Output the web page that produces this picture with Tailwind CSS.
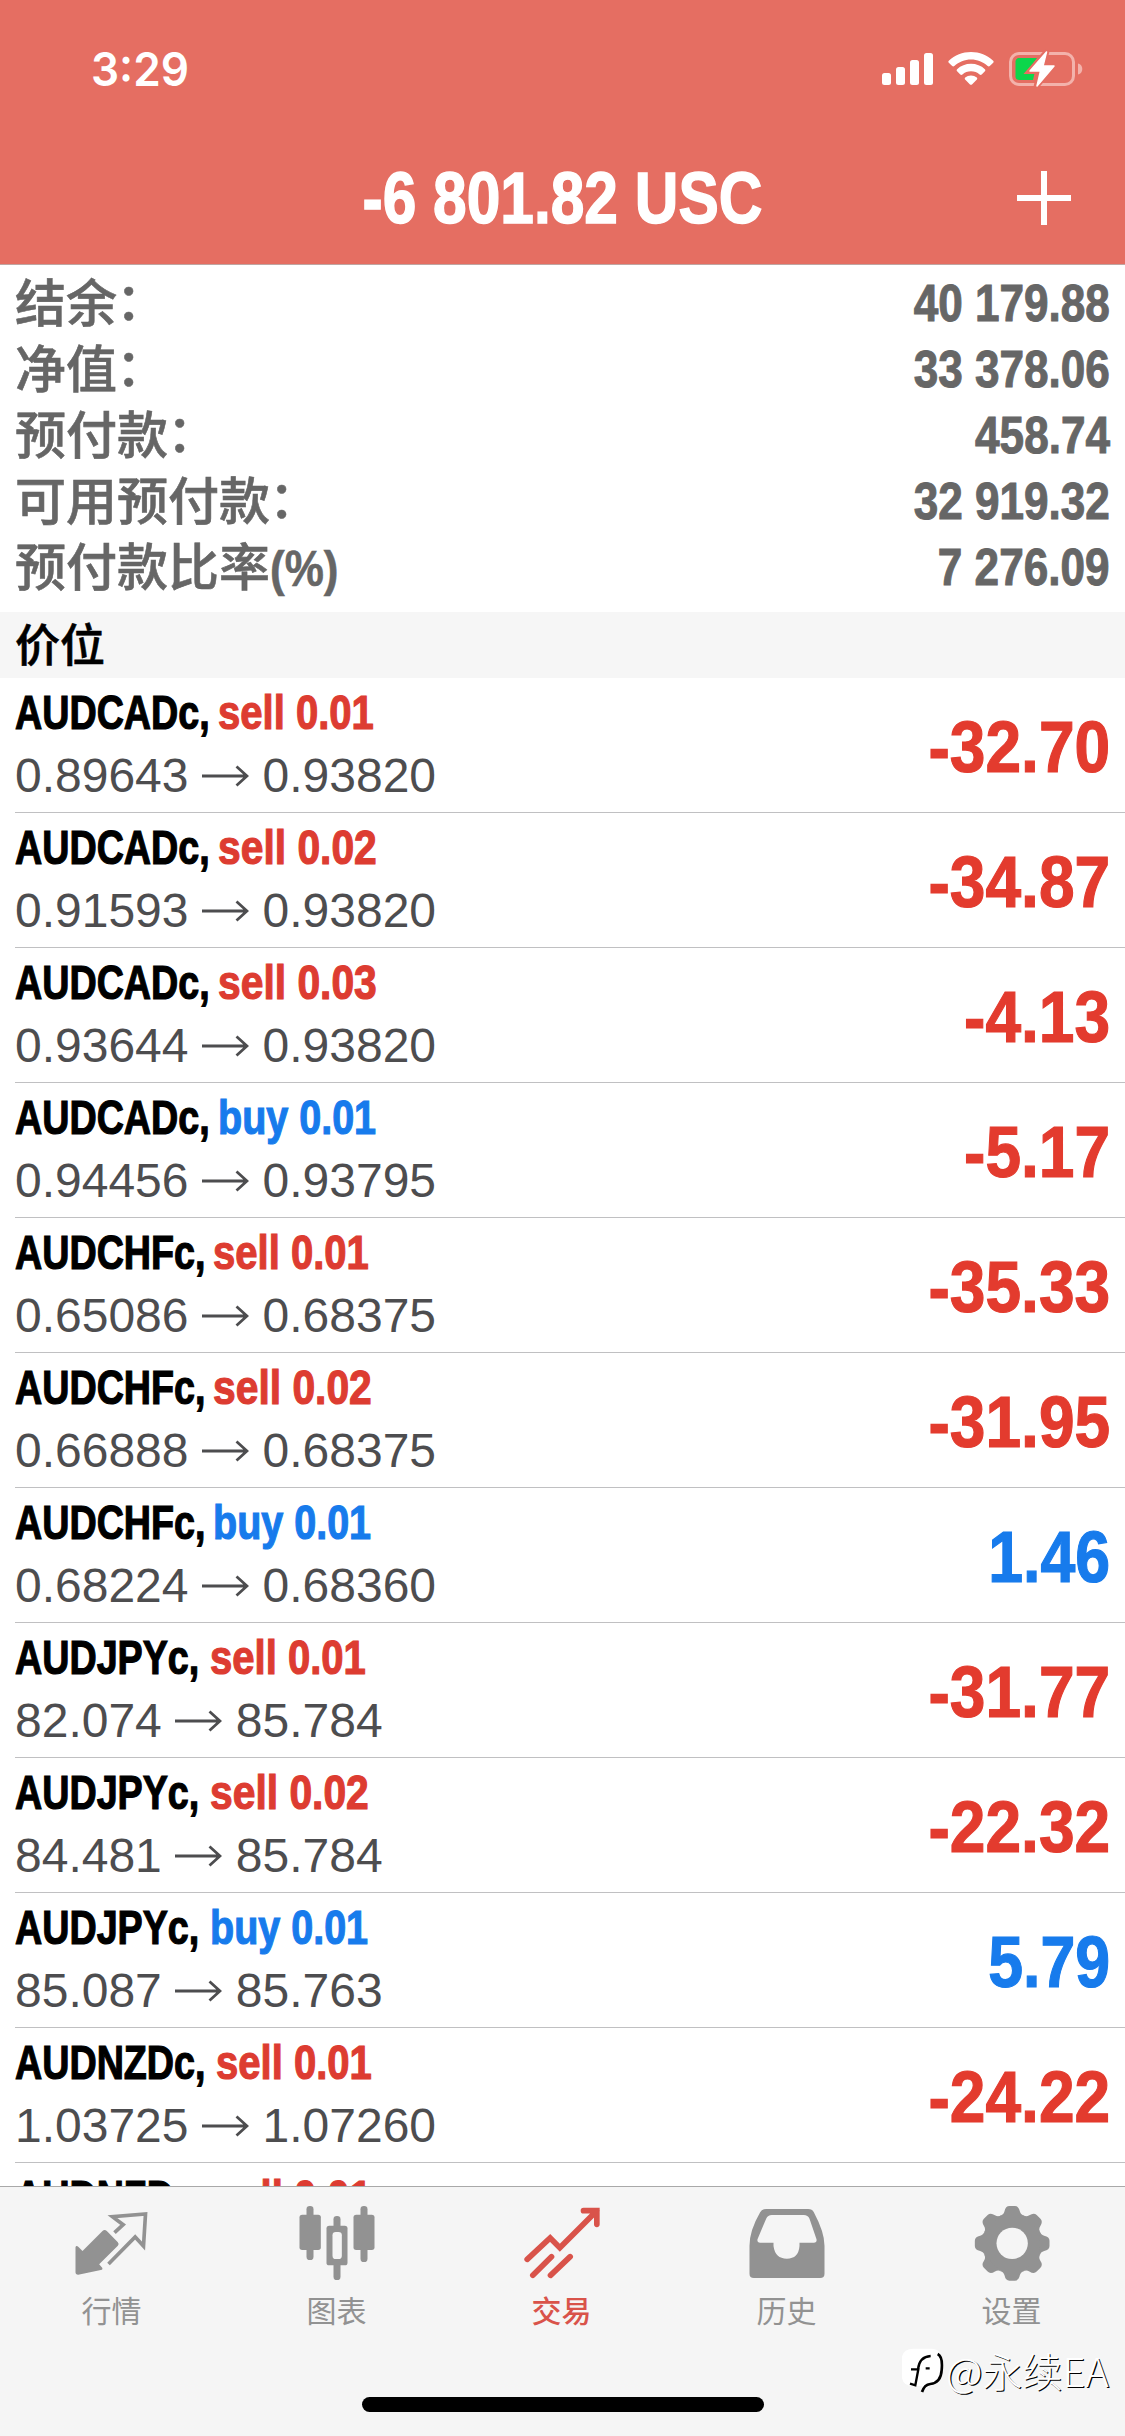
<!DOCTYPE html>
<html lang="zh-CN">
<head>
<meta charset="utf-8">
<title>交易</title>
<script src="https://cdn.jsdelivr.net/npm/@tailwindcss/browser@4"></script>
</head>
<body class="bg-white">
<div class="relative flex h-[2436px] w-[1125px] flex-col overflow-hidden bg-white font-['Liberation_Sans','Noto_Sans_CJK_SC',sans-serif]">
  <header class="flex h-[265px] shrink-0 flex-col border-b border-[#c0a5a2] bg-[#e56e62] text-white">
    <div class="flex h-[132px] items-start justify-between pr-[42px] pl-[91px]">
      <div class="origin-left scale-x-[0.94] pt-[39px] font-['Inter',sans-serif] text-[47px] leading-[60px] font-semibold">3:29</div>
      <svg class="mt-[40px] h-[60px] w-[205px]" viewBox="878 40 205 60" fill="#fff">
        <rect x="882" y="73" width="9" height="12" rx="2.5"/><rect x="896" y="67" width="9" height="18" rx="2.5"/><rect x="910" y="60" width="9" height="25" rx="2.5"/><rect x="924" y="53" width="9" height="32" rx="2.5"/>
        <path d="M971 52c8.500 0 16.300 3.300 22.200 8.700.6.600.6 1.500 0 2.100l-3.400 3.300c-.6.600-1.500.6-2.100 0C983.200 62 977.300 59.600 971 59.600s-12.200 2.400-16.700 6.500c-.6.600-1.500.6-2.100 0l-3.400-3.300c-.6-.6-.6-1.500 0-2.100C954.700 55.300 962.500 52 971 52z"/>
        <path d="M971 63.800c5.300 0 10.200 2 13.900 5.400.6.600.6 1.500 0 2.100l-3.200 3.200c-.6.500-1.500.6-2.100 0-2.300-2-5.300-3.200-8.600-3.200s-6.300 1.200-8.600 3.200c-.6.600-1.500.5-2.100 0l-3.200-3.200c-.6-.6-.6-1.500 0-2.100 3.700-3.400 8.600-5.400 13.900-5.400z"/>
        <path d="M971 75.500c2.200 0 4.200.8 5.800 2 .6.500.6 1.400.1 1.900l-4.900 5c-.6.600-1.400.6-2 0l-4.900-5c-.5-.5-.5-1.400.1-1.900 1.600-1.200 3.600-2 5.800-2z"/>
        <rect x="1010.500" y="53.500" width="63" height="31" rx="8.500" fill="none" stroke="#f3b2ab" stroke-width="3"/>
        <path d="M1078 63.500c3 .8 4.300 3 4.300 5.500s-1.300 4.700-4.300 5.500z" fill="#f3b2ab"/>
        <path d="M1019 58h18l-9 13h7l-2 9h-14c-2 0-3.500-1.500-3.500-3.500v-15c0-2 1.500-3.500 3.500-3.500z" fill="#0cd64b"/>
        <path d="M1047 51l-18 20.500h10.500L1036 87l18-21h-10.500z" stroke="#e56e62" stroke-width="5"/>
        <path d="M1046.500 52l-16.500 19h10.500L1037 86l17-20h-11z" stroke="#fff" stroke-width="1.500" stroke-linejoin="round"/>
      </svg>
    </div>
    <div class="grid h-[132px] grid-cols-[1fr_400px_1fr] items-center">
      <div></div>
      <h1 class="flex justify-center text-[73px] leading-[132px] font-bold [-webkit-text-stroke:1.5px]"><span class="scale-x-[0.828] whitespace-nowrap">-6 801.82 USC</span></h1>
      <svg class="mr-[54px] h-[54px] w-[54px] justify-self-end" viewBox="0 0 54 54" fill="#fff"><path d="M24 0h6v24h24v6H30v24h-6V30H0v-6h24z"/></svg>
    </div>
  </header>

  <section id="summary" class="flex h-[347px] shrink-0 flex-col pt-[7px] text-[#666]"></section>
  <h2 class="h-[66px] shrink-0 bg-[#f6f6f6] pt-[3px] pl-[15px] text-[45px] leading-[63px] font-medium text-black [-webkit-text-stroke:0.6px]">价位</h2>
  <main id="positions" class="min-h-0 flex-1 overflow-hidden"></main>

  <nav class="relative flex h-[250px] shrink-0 border-t border-[#a9a9a9] bg-[#f5f5f5] pt-[13px] text-[30px] leading-[56px] text-[#929292]">
    <div class="flex w-[225px] flex-col items-center">
      <svg class="h-[84px] w-[90px]" viewBox="202.500 150 270 252" fill="#929292">
        <path d="M225 292q2-8 9-1l12 12 60-60q6-6 13 0l33 34q5 6 0 10l-56 56 9 10q3 5-4 7l-68 14q-8 0-8-7z"/>
        <path d="M342 248l26-24-32-24 99-8-6 96-25-27-80 81" fill="none" stroke="#929292" stroke-width="11"/>
      </svg><span class="-translate-x-px">行情</span>
    </div>
    <div class="flex w-[225px] flex-col items-center">
      <svg class="h-[84px] w-[90px]" viewBox="877.500 150 270 252" fill="#929292">
        <rect x="918" y="168" width="21" height="162" rx="10"/><rect x="897" y="194" width="64" height="106" rx="8"/>
        <rect x="999" y="198" width="21" height="192" rx="10"/><rect x="978" y="227" width="63" height="119" rx="8"/><rect x="996" y="246" width="28" height="81" rx="10" fill="#f5f5f5"/>
        <rect x="1080" y="168" width="21" height="168" rx="10"/><rect x="1059" y="194" width="63" height="106" rx="8"/>
      </svg><span class="-translate-x-px">图表</span>
    </div>
    <div class="flex w-[225px] flex-col items-center text-[#d9534a]">
      <svg class="h-[84px] w-[90px]" viewBox="412.500 150 270 252" fill="none" stroke="#d9534a" stroke-width="17" stroke-linecap="round">
        <path d="M440 328l69-64 29 29L649 182M609 182h40v41M457 376l56-56M510 376l59-56"/>
      </svg><span class="-translate-x-px font-medium">交易</span>
    </div>
    <div class="flex w-[225px] flex-col items-center">
      <svg class="h-[84px] w-[90px]" viewBox="7.500 150 270 252" fill="#929292">
        <path fill-rule="evenodd" d="M77 177H203q12 0 17 10 32 60 32 100v84q0 13-13 13H40q-13 0-13-13v-84q0-45 32-100 6-10 18-10zM94 195q-12 0-17 11L51 268q-2 10 8 10H99v10q5 38 40 38t38-38v-10h43q10 0 8-10L207 206q-5-11-17-11z"/>
      </svg><span class="-translate-x-px">历史</span>
    </div>
    <div class="flex w-[225px] flex-col items-center">
      <svg class="h-[84px] w-[90px]" viewBox="682.500 150 270 252" fill="#929292">
        <g id="gear"></g><circle cx="815" cy="280" r="47" fill="#f5f5f5"/>
      </svg><span class="-translate-x-px">设置</span>
    </div>
    <div class="absolute top-[210px] left-[362px] h-[15px] w-[402px] rounded-full bg-black"></div>
    <div class="absolute top-[160px] left-[902px] flex items-center text-white">
      <svg class="h-[50px] w-[42px]" viewBox="485 607 126 150"><path d="M520 612h52q32 0 32 34v34q0 40-36 44l-26 20 4-20h-28q-34 0-34-34v-44q0-34 36-34z" fill="#fff"/><path d="M512 674h22l-9 48-16-5M533 674q4-38 38-40M556 671h12" fill="none" stroke="#000" stroke-width="7"/><path d="M592 628q16 8 12 48-2 38-34 42-18 2-25 24" fill="none" stroke="#000" stroke-width="8"/></svg>
      <span class="-mt-1 pl-0.5 font-['Noto_Sans_CJK_SC',sans-serif] text-[40px] leading-[50px] font-light whitespace-nowrap [text-shadow:1.2px_1.2px_0_#000]">@永续EA</span>
    </div>
  </nav>
</div>
<script>
const summary = [['结余：','40 179.88'],['净值：','33 378.06'],['预付款：','458.74'],['可用预付款：','32 919.32'],['预付款比率(%)','7 276.09']];
document.getElementById('summary').innerHTML = summary.map(([k, v]) => `
  <div class="flex h-[66px] items-center justify-between px-[15px] leading-[66px]">
    <span class="text-[51px] font-medium [-webkit-text-stroke:0.6px]">${k.replace('(%)', '<span class="inline-block origin-left scale-x-[0.88] text-[50px] font-bold">(%)</span>').replace('：', '<span class="inline-block -translate-x-px -translate-y-[2px]">：</span>')}</span>
    <span class="origin-right -translate-y-px scale-x-[0.865] text-[51px] font-bold [-webkit-text-stroke:1px]">${v}</span>
  </div>`).join('');

const symWidth = {AUDCADc: 203, AUDCHFc: 198, AUDJPYc: 195, AUDNZDc: 201};
const rows = [
  ['AUDCADc','sell','0.01','0.89643','0.93820','-32.70'],
  ['AUDCADc','sell','0.02','0.91593','0.93820','-34.87'],
  ['AUDCADc','sell','0.03','0.93644','0.93820','-4.13'],
  ['AUDCADc','buy','0.01','0.94456','0.93795','-5.17'],
  ['AUDCHFc','sell','0.01','0.65086','0.68375','-35.33'],
  ['AUDCHFc','sell','0.02','0.66888','0.68375','-31.95'],
  ['AUDCHFc','buy','0.01','0.68224','0.68360','1.46'],
  ['AUDJPYc','sell','0.01','82.074','85.784','-31.77'],
  ['AUDJPYc','sell','0.02','84.481','85.784','-22.32'],
  ['AUDJPYc','buy','0.01','85.087','85.763','5.79'],
  ['AUDNZDc','sell','0.01','1.03725','1.07260','-24.22'],
  ['AUDNZDc','sell','0.01','1.04725','1.07260','-17.25'],
];
const sideClass = (side, vol) => side === 'buy' ? 'scale-x-[0.823] text-[#177bec]'
  : vol === '0.01' ? 'scale-x-[0.834] text-[#dd3c31]' : 'scale-x-[0.85] text-[#dd3c31]';
document.getElementById('positions').innerHTML = rows.map(([s, side, vol, a, b, pl]) => `
  <div class="pl-[15px]">
    <div class="flex h-[135px] items-start justify-between border-b border-[#c0c0c2] pr-[15px]">
      <div class="pt-[5px] text-[48px] leading-[60px]">
        <div class="flex h-[60px] font-bold whitespace-nowrap [-webkit-text-stroke:1.2px]">
          <div style="width:${symWidth[s]}px"><span class="inline-block origin-left scale-x-[0.785] text-black">${s},</span></div>
          <span class="inline-block origin-left ${sideClass(side, vol)}">${side} ${vol}</span>
        </div>
        <div class="mt-[3px] flex h-[60px] items-center text-[#4d4d4f]">
          <span>${a}</span>
          <svg class="mr-[14px] ml-[13px] h-[24px] w-[47px]" viewBox="0 0 47 24" fill="none" stroke="#4d4d4f" stroke-width="2.800"><path d="M0 12H45M34.500 2.500L45 12 34.500 21.500"/></svg>
          <span>${b}</span>
        </div>
      </div>
      <span class="origin-right pt-[19px] text-[72px] leading-[100px] font-bold [-webkit-text-stroke:1.2px] ${pl[0] === '-' ? 'scale-x-[0.89] text-[#e33b2e]' : 'scale-x-[0.87] text-[#177bec]'}">${pl}</span>
    </div>
  </div>`).join('');

// Eight-tooth gear outline.
document.getElementById('gear').innerHTML = '<circle cx="815" cy="280" r="90"/>' + [0,45,90,135,180,225,270,315].map(a =>
  `<path transform="rotate(${a} 815 280)" d="M779 197q10-2 13-13 3-16 15-16h16q12 0 15 16 3 11 13 13z"/>`).join('');
</script>
</body>
</html>
